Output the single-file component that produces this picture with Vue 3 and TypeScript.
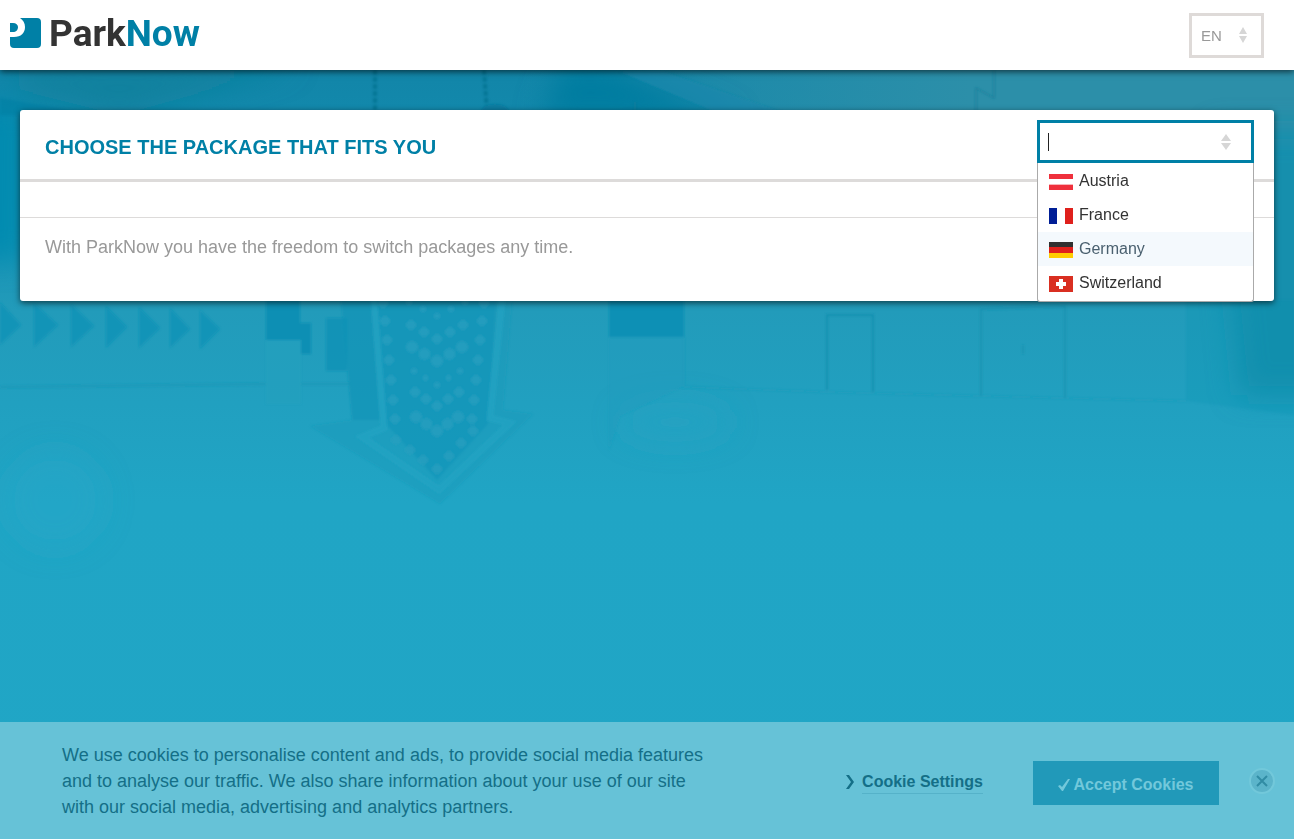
<script setup lang="ts">
import { ref } from 'vue'

interface Dot { x: number; y: number; r: number }

const countries = ['Austria', 'France', 'Germany', 'Switzerland']
const highlighted = ref('Germany')
const query = ref('')
const language = ref('EN')
const cookiesVisible = ref(true)

const wallArrows = [
  'M0 302L21 325L0 345Z', 'M34 303L58 325L34 347Z', 'M71 304L94 326L71 347Z', 'M106 306L127 327L106 348Z',
  'M139 307L160 328L139 348Z', 'M170 308L190 329L170 348Z', 'M200 310L220 329L200 349Z',
]

const chevron = (top: number, spread: number, r: number): Dot[] => [
  { x: 437 - spread, y: top, r }, { x: 437 - spread / 2, y: top + 7, r }, { x: 437, y: top + 14, r },
  { x: 437 + spread / 2, y: top + 7, r }, { x: 437 + spread, y: top, r },
]
const bulbs: Dot[] = [
  ...chevron(302, 28, 3), ...chevron(325, 26, 5), ...chevron(347, 25, 6), ...chevron(371, 23, 3),
  ...chevron(392, 22, 5), ...chevron(417, 21, 6),
  ...[303, 321, 340, 360, 380, 400, 419].flatMap((y, i) => [
    { x: 383 + i * 2, y, r: 5 }, { x: 484 - i * 2, y, r: 5 },
  ]),
  { x: 396, y: 440, r: 5 }, { x: 410, y: 450, r: 5 }, { x: 423, y: 460, r: 5 }, { x: 437, y: 469, r: 5 },
  { x: 449, y: 456, r: 5 }, { x: 461, y: 443, r: 5 }, { x: 473, y: 431, r: 5 },
]
</script>

<template>
  <div class="page">
    <svg class="backdrop" viewBox="0 0 1294 839" preserveAspectRatio="xMidYMin slice" aria-hidden="true">
      <defs>
        <linearGradient id="base" x1="0" y1="0" x2="0" y2="1">
          <stop offset="0.08" stop-color="#1285a8" />
          <stop offset="0.24" stop-color="#138fb2" />
          <stop offset="0.37" stop-color="#229bba" />
          <stop offset="0.48" stop-color="#21a0c0" />
          <stop offset="0.6" stop-color="#20a5c5" />
          <stop offset="1" stop-color="#20a6c6" />
        </linearGradient>
        <linearGradient id="right" x1="0" y1="0" x2="1" y2="0">
          <stop offset="0.4" stop-color="#2c8fa9" stop-opacity="0" />
          <stop offset="0.75" stop-color="#2c8fa9" />
        </linearGradient>
        <filter id="soft"><feGaussianBlur stdDeviation="1" /></filter>
        <filter id="glow" x="-20%" y="-20%" width="140%" height="140%"><feGaussianBlur stdDeviation="14" /></filter>
      </defs>
      <rect width="1294" height="839" fill="url(#base)" />
      <rect y="70" width="1294" height="80" fill="url(#right)" />
      <g filter="url(#glow)">
        <path d="M15 65H300L120 115L20 90Z" fill="#14809b" opacity="0.8" />
        <path d="M-20 100L22 110V260H-20Z" fill="#038bb0" />
        <path d="M560 65H610L740 120H540Z" fill="#047da0" />
        <path d="M1215 130H1330V395H1240Z" fill="#178fad" />
        <circle cx="55" cy="500" r="50" fill="#2aa9ca" opacity="0.35" />
        <ellipse cx="675" cy="422" rx="55" ry="20" fill="#2aa4c3" opacity="0.6" />
      </g>
      <g filter="url(#soft)">
        <path d="M0 98L100 115H0Z" fill="#047da3" opacity="0.55" />
        <path d="M620 72H665L800 118H730Z" fill="#1787ac" opacity="0.7" />
        <path d="M375 70V112M484 70L487 112" stroke="#08718f" stroke-width="4" stroke-dasharray="5 2" opacity="0.7" />
        <ellipse cx="495" cy="112" rx="14" ry="8" fill="#087ba0" />
        <path d="M994 70V98L976 88V112M635 102V115" fill="none" stroke="#197b98" stroke-width="1" />
        <path v-for="shape in wallArrows" :key="shape" :d="shape" fill="#0f92b7" opacity="0.8" />
        <path d="M266 300H300V323H311V354H301V340H266Z" fill="#0e8fb4" />
        <path d="M266 340H301V404H266Z" fill="#229fbe" opacity="0.7" />
        <path d="M326 318H347V371H326Z" fill="#1291b5" opacity="0.8" />
        <path d="M0 387L266 384M301 384H350" stroke="#1996b5" stroke-width="2" opacity="0.7" />
        <path d="M341 300H512L503 410L533 414L440 504L310 426L352 420Z" fill="#1599ba" opacity="0.4" />
        <path d="M341 300H372L380 420H352Z" fill="#1291b5" opacity="0.5" />
        <path d="M376 300H496L488 424L437 480L386 424Z" fill="#1193b8" opacity="0.55" />
        <path d="M374 300L384 428L362 437L439 490L510 423L490 418L502 300" fill="none" stroke="#26a5c4" stroke-width="7" opacity="0.6" />
        <circle v-for="(dot, i) in bulbs" :key="i" :cx="dot.x" :cy="dot.y" :r="dot.r" fill="#289fbf" opacity="0.75" />
        <path d="M609 300H684V337H609Z" fill="#1190b5" />
        <path d="M609 338H684V386L620 416L609 450Z" fill="#1d9bbd" opacity="0.5" />
        <path d="M684 338V387L826 392L1060 398L1186 401" fill="none" stroke="#1e9ab8" opacity="0.6" />
        <path d="M827 390V315H873V392" fill="none" stroke="#1991b0" stroke-width="2" />
        <path d="M981 396V309L1065 306V398M1023 345V354" fill="none" stroke="#1992b1" stroke-width="2" opacity="0.8" />
        <path d="M1186 300H1294V415L1186 401Z" fill="#1690ad" opacity="0.2" />
      </g>
    </svg>

    <header class="topbar">
      <a class="logo" href="#" aria-label="ParkNow">
        <svg class="logo-mark" viewBox="0 0 31 30" aria-hidden="true">
          <path d="M10 0H27Q31 0 31 4V26Q31 30 27 30H4Q0 30 0 26V19H4C11 19 15 15 15 9C15 5 13 2 10 0ZM0 5H3C6 5 8 7 8 9C8 12 6 14 3 14H0Z" fill="#0080a6" />
        </svg>
        <span class="logo-text">Park<span class="logo-now">Now</span></span>
      </a>
      <label class="language">
        <select v-model="language" aria-label="Language">
          <option>EN</option>
          <option>DE</option>
          <option>FR</option>
        </select>
        <svg class="sorter" viewBox="0 0 10 16" aria-hidden="true"><path d="M5 0L9 7H1ZM1 9H9L5 16Z" /></svg>
      </label>
    </header>

    <main class="content">
      <section class="card">
        <div class="card-head">
          <h1>CHOOSE THE PACKAGE THAT FITS YOU</h1>
          <div class="picker">
            <div class="field">
              <input v-model="query" type="text" role="combobox" aria-label="Country" aria-expanded="true" aria-controls="countries">
              <span v-if="!query" class="caret"></span>
              <svg class="sorter" viewBox="0 0 10 16" aria-hidden="true"><path d="M5 0L10 7H0ZM0 9H10L5 16Z" /></svg>
            </div>
            <ul id="countries" class="options" role="listbox">
              <li
                v-for="country in countries"
                :key="country"
                role="option"
                :aria-selected="country === highlighted"
                :class="{ active: country === highlighted }"
                @mouseenter="highlighted = country"
              >
                <svg class="flag" viewBox="0 0 24 16" aria-hidden="true">
                  <template v-if="country === 'Austria'">
                    <rect width="24" height="16" fill="#ef303c" />
                    <rect y="5" width="24" height="6" fill="#fff" />
                    <rect y="10" width="24" height="1" fill="#f8b5b9" />
                  </template>
                  <template v-else-if="country === 'France'">
                    <rect width="24" height="16" fill="#fff" />
                    <rect width="8" height="16" fill="#001e96" />
                    <rect x="16" width="8" height="16" fill="#df201c" />
                  </template>
                  <template v-else-if="country === 'Germany'">
                    <rect width="24" height="16" fill="#fc0" />
                    <rect width="24" height="11" fill="#df201c" />
                    <rect width="24" height="5" fill="#303030" />
                  </template>
                  <template v-else>
                    <rect width="24" height="16" fill="#d92f21" />
                    <path d="M10 3H14V6H17V10H14V13H10V10H7V6H10Z" fill="#fff" />
                  </template>
                </svg>
                <span>{{ country }}</span>
              </li>
            </ul>
          </div>
        </div>
        <div class="card-gap"></div>
        <p class="note">With ParkNow you have the freedom to switch packages any time.</p>
      </section>
    </main>

    <footer v-if="cookiesVisible" class="cookies">
      <p>We use cookies to personalise content and ads, to provide social media features and to analyse our traffic. We also share information about your use of our site with our social media, advertising and analytics partners.</p>
      <a class="settings" href="#">
        <svg viewBox="0 0 8 14" aria-hidden="true"><path d="M0 0H3L8 7L3 14H0L5 7Z" /></svg>
        <span>Cookie Settings</span>
      </a>
      <button class="accept" type="button" @click="cookiesVisible = false">
        <svg viewBox="0 0 12 12" aria-hidden="true"><path d="M0 7L2 6L4 8L10 0H12L5 12H4Z" /></svg>
        <span>Accept Cookies</span>
      </button>
      <button class="close" type="button" aria-label="Close" @click="cookiesVisible = false">
        <svg viewBox="0 0 26 26" aria-hidden="true">
          <circle cx="13" cy="13" r="12" fill="#5bb4ca" stroke="#72c8da" stroke-width="2" />
          <path d="M8 8L18 18M18 8L8 18" stroke="#318ca4" stroke-width="2" />
        </svg>
      </button>
    </footer>
  </div>
</template>

<style>
body {
  margin: 0;
  background: #20a6c6;
}
</style>

<style scoped>
.page {
  position: relative;
  display: flex;
  flex-direction: column;
  min-height: 100vh;
  overflow: hidden;
  font-family: "Liberation Sans", Arial, sans-serif;
}

.page * {
  box-sizing: border-box;
}

.backdrop {
  position: absolute;
  inset: 0;
  width: 100%;
  height: 100%;
}

.topbar {
  position: relative;
  display: flex;
  align-items: center;
  justify-content: space-between;
  height: 70px;
  padding: 0 30px 0 10px;
  background: #fff;
  box-shadow: 0 2px 6px rgba(0, 0, 0, 0.6);
}

.logo {
  display: flex;
  align-items: center;
  gap: 8px;
  padding-bottom: 4px;
  text-decoration: none;
}

.logo-mark {
  width: 31px;
  height: 30px;
}

.logo-text {
  padding-top: 2px;
  color: #333;
  font-family: Roboto, sans-serif;
  font-size: 37px;
  font-weight: 700;
  line-height: 44px;
}

.logo-now {
  color: #0080a6;
}

.language {
  display: flex;
  align-items: center;
  width: 75px;
  height: 45px;
  padding-right: 13px;
  border: 3px solid #dedad8;
}

.language select {
  flex: 1;
  min-width: 0;
  height: 100%;
  padding: 0 0 0 9px;
  border: 0;
  outline: 0;
  appearance: none;
  background: transparent;
  color: #999;
  font: 15px "Liberation Sans", Arial, sans-serif;
}

.sorter {
  width: 10px;
  height: 16px;
  fill: #d6d6d6;
}

.content {
  position: relative;
  padding: 40px 20px;
}

.card {
  border-radius: 3px;
  background: #fff;
  box-shadow: 0 2px 6px rgba(0, 0, 0, 0.6);
}

.card-head {
  display: flex;
  align-items: flex-start;
  justify-content: space-between;
  height: 72px;
  padding: 10px 20px 0 25px;
  border-bottom: 3px solid #dddbda;
}

h1 {
  margin: 0;
  padding-top: 15px;
  color: #0080a6;
  font-size: 20px;
  line-height: 24px;
}

.picker {
  position: relative;
  width: 217px;
}

.field {
  display: flex;
  align-items: center;
  height: 43px;
  padding: 0 20px 0 8px;
  border: 3px solid #0080a6;
  background: #fff;
}

.field input {
  flex: 1;
  min-width: 0;
  height: 37px;
  padding: 0;
  border: 0;
  outline: 0;
  background: transparent;
  font: 16px "Liberation Sans", Arial, sans-serif;
}

.caret {
  position: absolute;
  top: 13px;
  left: 11px;
  width: 1px;
  height: 18px;
  background: #222;
}

.options {
  position: absolute;
  z-index: 1;
  top: 43px;
  right: 0;
  left: 0;
  margin: 0;
  padding: 1px 0;
  border: 1px solid #aaa;
  border-top: 0;
  border-radius: 0 0 3px 3px;
  background: #fff;
  list-style: none;
}

.options li {
  display: flex;
  align-items: center;
  gap: 6px;
  height: 34px;
  padding: 0 11px;
  color: #333;
  font-size: 16px;
}

.options .active {
  background: #f4f9fd;
  color: #4a606f;
}

.options li span {
  padding-bottom: 1px;
}

.flag {
  width: 24px;
  height: 16px;
  margin-top: 2px;
}

.card-gap {
  height: 36px;
  border-bottom: 1px solid #dddbda;
}

.note {
  margin: 0;
  padding: 18px 25px 43px;
  color: #999;
  font-size: 18px;
  line-height: 22px;
}

.cookies {
  position: relative;
  display: flex;
  align-items: center;
  margin-top: auto;
  padding: 20px 19px 19px 62px;
  background: #66c2d7;
  color: #146f87;
}

.cookies p {
  flex: 0 1 656px;
  margin: 0;
  font-size: 18px;
  line-height: 26px;
}

.settings {
  display: flex;
  align-items: center;
  gap: 8px;
  margin-left: auto;
  padding-top: 2px;
  color: #146f87;
  font-size: 16px;
  font-weight: 700;
  line-height: 22px;
  text-decoration: none;
  white-space: nowrap;
}

.settings span {
  border-bottom: 1px solid #55b2c9;
}

.settings svg {
  width: 8px;
  height: 14px;
  fill: #146f87;
}

.accept {
  display: flex;
  align-items: center;
  justify-content: center;
  gap: 3px;
  width: 186px;
  height: 44px;
  margin: 4px 30px 0 50px;
  padding: 3px 0 0;
  border: 0;
  background: #2199b9;
  color: #72c8db;
  font: 700 16px "Liberation Sans", Arial, sans-serif;
  white-space: nowrap;
}

.accept svg {
  width: 12px;
  height: 12px;
  fill: #72c8db;
}

.close {
  width: 26px;
  height: 26px;
  padding: 0;
  border: 0;
  background: transparent;
}

.close svg {
  display: block;
  width: 26px;
  height: 26px;
}
</style>
